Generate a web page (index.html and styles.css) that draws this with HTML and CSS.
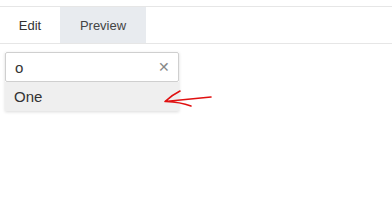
FILE: index.html
```html
<!DOCTYPE html>
<html lang="en">
<head>
  <meta charset="UTF-8">
  <title>Combo preview</title>
  <link rel="stylesheet" href="styles.css">
</head>
<body>
  <div class="tabs">
    <div class="tab">Edit</div>
    <div class="tab active">Preview</div>
  </div>
  <div class="panel">
    <div class="combo">
      <div class="field">
        <span class="value">o</span>
        <span class="clear">&#x2715;</span>
      </div>
      <div class="option">One</div>
      <svg class="arrow" width="56" height="25" viewBox="0 0 56 25">
        <path d="M51 12 L5 16.5 M5 16.5 Q12 10 20 6 M6 16.5 Q20 17 31 21" fill="none" stroke="#e01010" stroke-width="1.6" stroke-linecap="round"/>
      </svg>
    </div>
  </div>
</body>
</html>
```

FILE: styles.css
```css
body {
  margin: 0;
  font-family: "Liberation Sans", Arial, sans-serif;
  background: #fff;
  color: #333;
}

.tabs {
  display: flex;
  margin-top: 6px;
  border-top: 1px solid #e6e6e6;
  border-bottom: 1px solid #e6e6e6;
  height: 36px;
}

.tab {
  display: flex;
  align-items: center;
  justify-content: center;
  font-size: 13px;
  color: #333;
}

.tab:first-child {
  width: 60px;
}

.tab.active {
  width: 86px;
  background: #e8ebef;
  color: #444;
}

.panel {
  padding: 8px 5px;
}

.combo {
  position: relative;
  width: 174px;
  box-shadow: 0 1px 3px rgba(0, 0, 0, 0.15);
}

.field {
  display: flex;
  align-items: center;
  justify-content: space-between;
  height: 28px;
  padding: 0 8px 0 9px;
  border: 1px solid #cfcfcf;
  border-radius: 2px;
  background: #fff;
  font-size: 15px;
}

.clear {
  font-size: 14px;
  color: #888;
}

.option {
  height: 29px;
  line-height: 29px;
  padding-left: 9px;
  background: #efefef;
  font-size: 15px;
  color: #333;
}

.arrow {
  position: absolute;
  left: 155px;
  top: 33px;
}
```
